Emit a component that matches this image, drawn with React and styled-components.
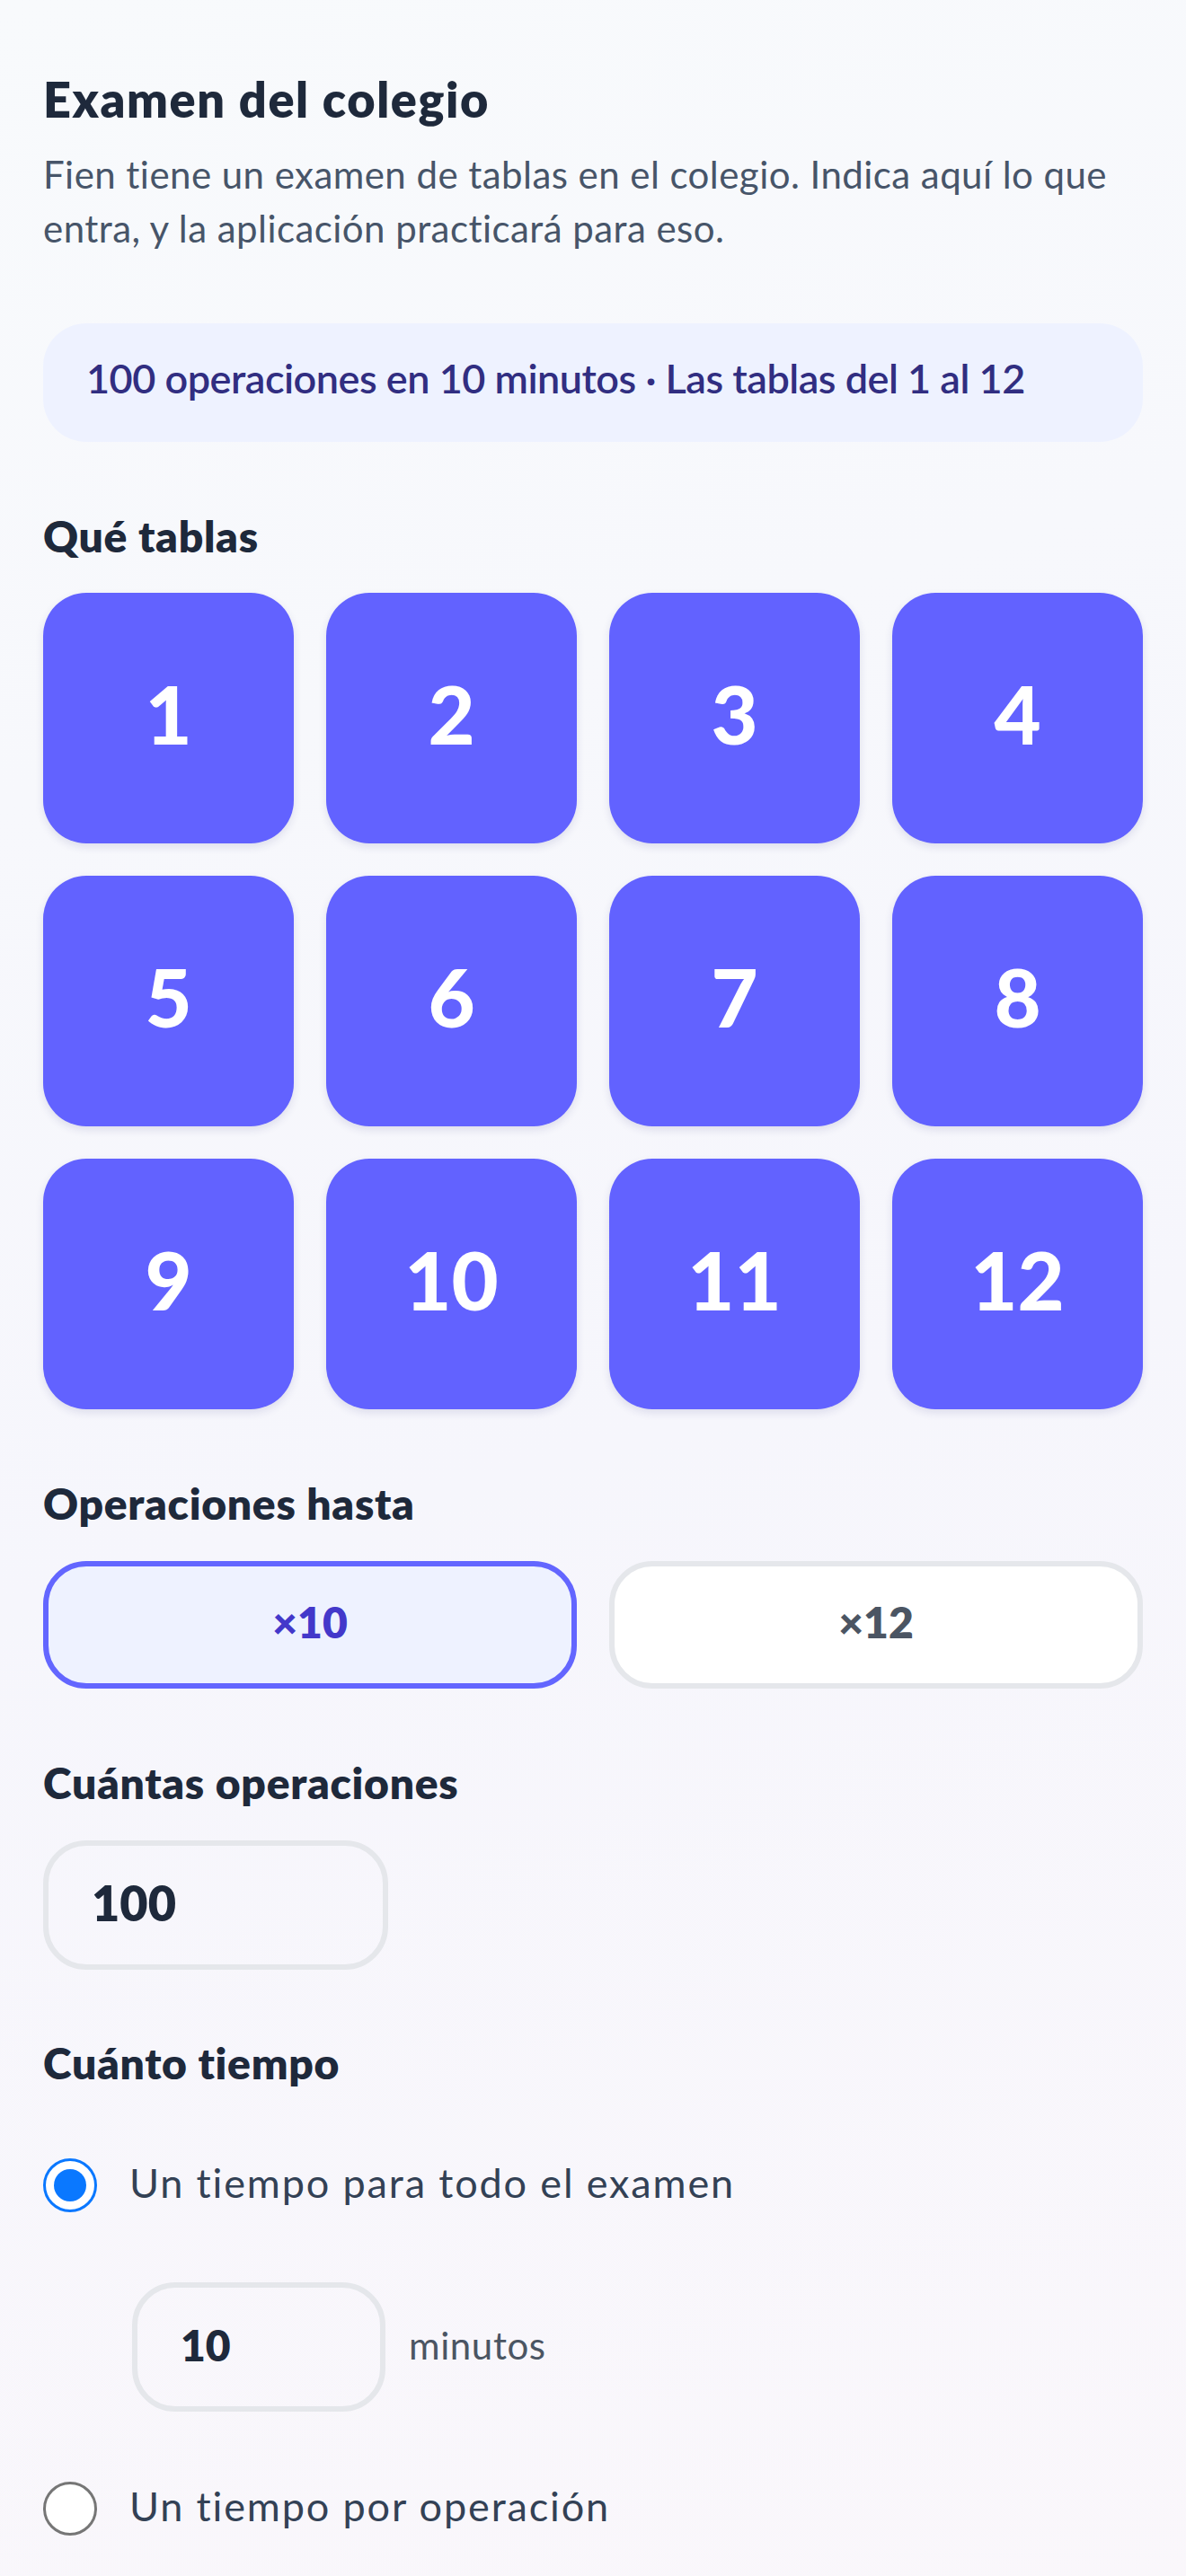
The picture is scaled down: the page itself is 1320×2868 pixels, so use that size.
import React from "react";
import styled, { createGlobalStyle } from "styled-components";

const GlobalStyle = createGlobalStyle`
  * { box-sizing: border-box; }
  html, body { margin: 0; padding: 0; }
  body {
    font-family: "Lato", "Noto Sans", sans-serif;
    background: linear-gradient(165deg, #f8fafc 0%, #f6f6fc 55%, #faf7fb 100%);
    min-height: 2868px;
    color: #1e293b;
  }
`;

const Page = styled.main`
  padding: 78px 48px 80px;
  display: flex;
  flex-direction: column;
`;

const Title = styled.h1`
  margin: 0;
  font-size: 54px;
  line-height: 65px;
  font-weight: 800;
  letter-spacing: 1.6px;
  color: #1e293b;
`;

const Description = styled.p`
  margin: 21px 0 0;
  font-size: 42px;
  line-height: 60px;
  letter-spacing: 0.45px;
  color: #475569;
`;

const Summary = styled.div`
  margin-top: 76px;
  background: #eef2ff;
  border-radius: 48px;
  padding: 36px 48px 46px;
  font-size: 45px;
  line-height: 50px;
  font-weight: 600;
  letter-spacing: -0.5px;
  color: #312e81;
`;

const Section = styled.section`
  margin-top: ${(p) => p.$gap || 76}px;
  display: flex;
  flex-direction: column;
`;

const Label = styled.h2`
  margin: 0 0 ${(p) => p.$after || 35}px;
  font-size: 48px;
  line-height: 58px;
  font-weight: 800;
  letter-spacing: 0.7px;
  color: #1e293b;
`;

const TileGrid = styled.div`
  display: grid;
  grid-template-columns: repeat(4, 1fr);
  gap: 36px;
`;

const Tile = styled.button`
  aspect-ratio: 1 / 1;
  border: none;
  border-radius: 48px;
  background: #6262ff;
  color: #ffffff;
  font-family: inherit;
  font-size: 90px;
  font-weight: 900;
  display: flex;
  align-items: center;
  justify-content: center;
  padding: 0 0 12px;
  box-shadow: 0 4px 10px rgba(40, 40, 120, 0.12);
`;

const Segmented = styled.div`
  display: grid;
  grid-template-columns: 1fr 1fr;
  gap: 36px;
`;

const SegButton = styled.button`
  height: 142px;
  border-radius: 48px;
  border: 6px solid ${(p) => (p.$active ? "#6366ff" : "#e5e7eb")};
  background: ${(p) => (p.$active ? "#eef2ff" : "#ffffff")};
  color: ${(p) => (p.$active ? "#4338ca" : "#4b5563")};
  font-family: inherit;
  font-size: 48px;
  font-weight: 800;
  display: flex;
  align-items: center;
  justify-content: center;
  padding: 0 0 8px;
`;

const NumberField = styled.input`
  width: ${(p) => p.$width}px;
  height: 144px;
  border: 6px solid #e5e7eb;
  border-radius: 48px;
  background: transparent;
  padding: 0 48px 6px;
  font-family: inherit;
  font-size: ${(p) => p.$size}px;
  font-weight: 800;
  color: #1e293b;
  outline: none;
`;

const OptionList = styled.div`
  display: flex;
  flex-direction: column;
  gap: 78px;
`;

const OptionRow = styled.label`
  display: flex;
  align-items: center;
  gap: 36px;
  height: 60px;
`;

const OptionText = styled.span`
  font-size: 45px;
  line-height: 60px;
  letter-spacing: 1.85px;
  color: #334155;
  margin-top: -6px;
`;

const Radio = styled.span`
  width: 60px;
  height: 60px;
  flex: none;
  border-radius: 50%;
  background: #ffffff;
  border: 3px solid ${(p) => (p.$checked ? "#0a78ff" : "#767676")};
  display: flex;
  align-items: center;
  justify-content: center;
  &::after {
    content: "";
    width: 36px;
    height: 36px;
    border-radius: 50%;
    background: ${(p) => (p.$checked ? "#0a78ff" : "transparent")};
  }
`;

const MinutesRow = styled.div`
  display: flex;
  align-items: center;
  gap: 26px;
  padding-left: 99px;
`;

const Unit = styled.span`
  font-size: 42px;
  letter-spacing: 0.6px;
  color: #4b5563;
  padding-bottom: 4px;
`;

export default function App() {
  const tables = Array.from({ length: 12 }, (_, i) => i + 1);
  return (
    <>
      <GlobalStyle />
      <Page>
        <Title>Examen del colegio</Title>
        <Description>
          Fien tiene un examen de tablas en el colegio. Indica aquí lo que
          entra, y la aplicación practicará para eso.
        </Description>
        <Summary>100 operaciones en 10 minutos · Las tablas del 1 al 12</Summary>

        <Section>
          <Label $after={34}>Qué tablas</Label>
          <TileGrid>
            {tables.map((n) => (
              <Tile key={n}>{n}</Tile>
            ))}
          </TileGrid>
        </Section>

        <Section>
          <Label>Operaciones hasta</Label>
          <Segmented>
            <SegButton $active>×10</SegButton>
            <SegButton>×12</SegButton>
          </Segmented>
        </Section>

        <Section>
          <Label>Cuántas operaciones</Label>
          <NumberField $width={384} $size={54} defaultValue="100" readOnly />
        </Section>

        <Section $gap={75}>
          <Label $after={77}>Cuánto tiempo</Label>
          <OptionList>
            <OptionRow>
              <Radio $checked />
              <OptionText>Un tiempo para todo el examen</OptionText>
            </OptionRow>
            <MinutesRow>
              <NumberField $width={282} $size={48} defaultValue="10" readOnly />
              <Unit>minutos</Unit>
            </MinutesRow>
            <OptionRow>
              <Radio />
              <OptionText>Un tiempo por operación</OptionText>
            </OptionRow>
          </OptionList>
        </Section>
      </Page>
    </>
  );
}
